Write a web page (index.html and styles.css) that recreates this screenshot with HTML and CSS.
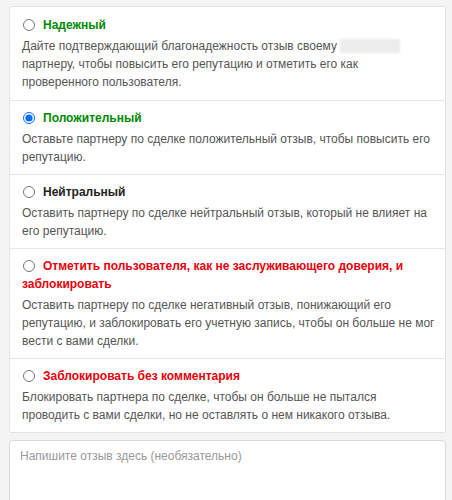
FILE: index.html
```html
<!DOCTYPE html>
<html lang="ru">
<head>
<meta charset="utf-8">
<link rel="stylesheet" href="styles.css">
</head>
<body>
<div class="wrap">
  <div class="card">
    <label class="item">
      <div class="title green"><input type="radio" name="fb" class="radio">Надежный</div>
      <div class="desc">Дайте подтверждающий благонадежность отзыв своему <span class="blur"></span> партнеру, чтобы повысить его репутацию и отметить его как проверенного пользователя.</div>
    </label>
    <label class="item">
      <div class="title green"><input type="radio" name="fb" class="radio" checked>Положительный</div>
      <div class="desc">Оставьте партнеру по сделке положительный отзыв, чтобы повысить его репутацию.</div>
    </label>
    <label class="item">
      <div class="title"><input type="radio" name="fb" class="radio">Нейтральный</div>
      <div class="desc">Оставить партнеру по сделке нейтральный отзыв, который не влияет на его репутацию.</div>
    </label>
    <label class="item">
      <div class="title red"><input type="radio" name="fb" class="radio">Отметить пользователя, как не заслуживающего доверия, и заблокировать</div>
      <div class="desc">Оставить партнеру по сделке негативный отзыв, понижающий его репутацию, и заблокировать его учетную запись, чтобы он больше не мог вести с вами сделки.</div>
    </label>
    <label class="item">
      <div class="title red"><input type="radio" name="fb" class="radio">Заблокировать без комментария</div>
      <div class="desc">Блокировать партнера по сделке, чтобы он больше не пытался проводить с вами сделки, но не оставлять о нем никакого отзыва.</div>
    </label>
  </div>
  <textarea class="comment" placeholder="Напишите отзыв здесь (необязательно)"></textarea>
</div>
</body>
</html>
```
FILE: styles.css
```css
html, body {
  margin: 0;
  padding: 0;
  background: #f4f4f4;
}
body {
  font-family: "Liberation Sans", Arial, sans-serif;
  font-size: 12px;
  line-height: 18px;
  color: #555;
}
.wrap {
  padding: 6px 6px 0 9px;
  display: flex;
  flex-direction: column;
  gap: 7px;
}
.card {
  background: #fff;
  border: 1px solid #e3e3e3;
  border-radius: 2px;
  display: flex;
  flex-direction: column;
}
.item {
  display: block;
  padding: 8px 10px 8px 12px;
  border-top: 1px solid #e6e6e6;
}
.item:first-child {
  border-top: none;
  padding-top: 9px;
  padding-bottom: 9px;
}
.title {
  font-weight: bold;
  color: #222;
  margin-bottom: 3px;
}
.title.green { color: #008a00; }
.title.red { color: #e8000b; }
.radio {
  width: 12px;
  height: 12px;
  margin: 0 8px 0 1px;
  vertical-align: -2px;
  accent-color: #0a6cff;
}
.desc {
  color: #555;
}
.blur {
  display: inline-block;
  width: 60px;
  height: 14px;
  vertical-align: -3px;
  background: #ececec;
  filter: blur(1px);
}
.comment {
  display: block;
  box-sizing: border-box;
  width: 100%;
  height: 80px;
  margin: 0;
  padding: 6px 10px;
  border: 1px solid #d9d9d9;
  border-radius: 4px;
  background: #fff;
  font-family: "Liberation Sans", Arial, sans-serif;
  font-size: 12px;
  line-height: 18px;
  color: #333;
  resize: vertical;
}
.comment::placeholder {
  color: #999;
}
```
